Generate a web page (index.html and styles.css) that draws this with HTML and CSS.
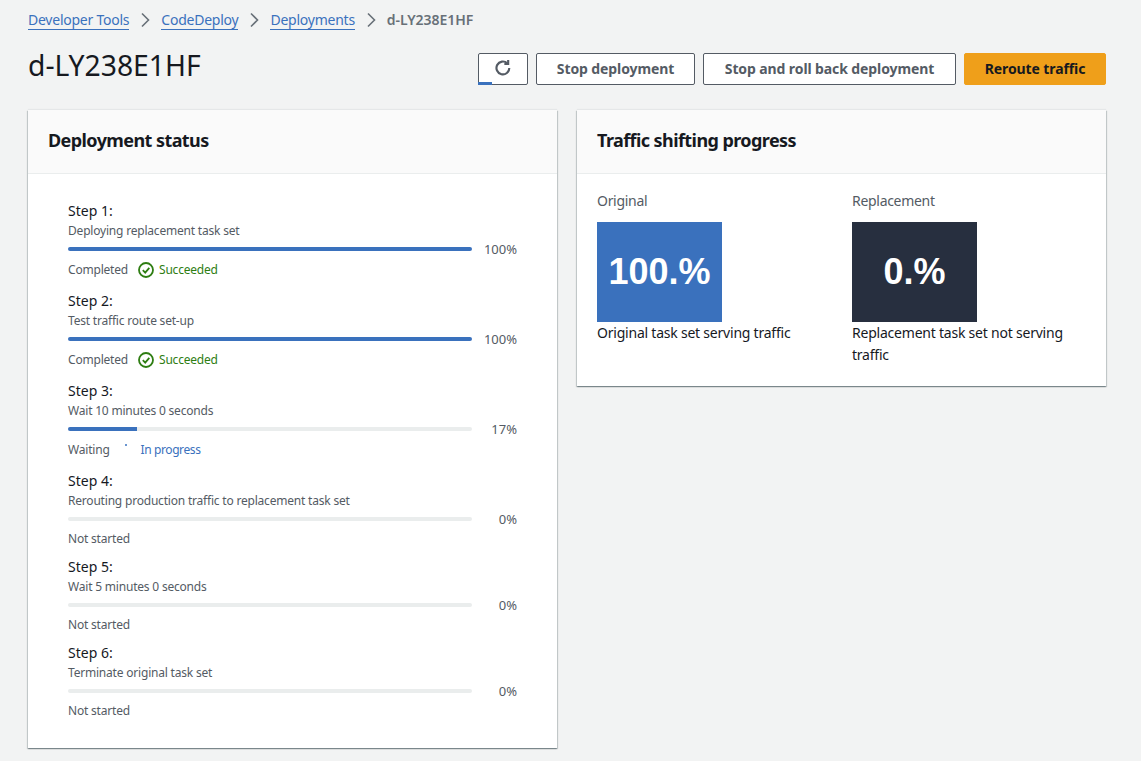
FILE: index.html
```html
<!DOCTYPE html>
<html>
  <head>
    <link rel="stylesheet" href="styles.css">
  </head>
  <body>
    <nav class="crumbs">
      <a href="#">Developer Tools</a>
      <svg class="chev" viewBox="0 0 10 16"><path d="M2 1.5 8.5 8 2 14.5"/></svg>
      <a href="#">CodeDeploy</a>
      <svg class="chev" viewBox="0 0 10 16"><path d="M2 1.5 8.5 8 2 14.5"/></svg>
      <a href="#">Deployments</a>
      <svg class="chev" viewBox="0 0 10 16"><path d="M2 1.5 8.5 8 2 14.5"/></svg>
      <span class="current">d-LY238E1HF</span>
    </nav>
    <header class="head">
      <h1>d-LY238E1HF</h1>
      <div class="actions">
        <button class="btn btn-icon">
          <svg viewBox="0 0 16 16"><path d="M13.6 7.9a5.7 5.7 0 1 1-1.8-4.1"/><path d="M12.6 0.9v3.4H9.2"/></svg>
          <span class="loader"></span>
        </button>
        <button class="btn btn-stop">Stop deployment</button>
        <button class="btn btn-roll">Stop and roll back deployment</button>
        <button class="btn btn-primary">Reroute traffic</button>
      </div>
    </header>
    <main class="cards">
      <section class="card">
        <h2>Deployment status</h2>
        <div class="steps">
          <div class="step">
            <div class="step-name">Step 1:</div>
            <div class="step-desc">Deploying replacement task set</div>
            <div class="bar-row"><div class="bar"><div class="fill" style="width: 100%"></div></div><span class="pct">100%</span></div>
            <div class="status">
              <span>Completed</span>
              <span class="ok"><svg viewBox="0 0 16 16"><circle cx="8" cy="8" r="7"/><path d="M4.8 8.2 7.2 10.6 11.3 5.9"/></svg>Succeeded</span>
            </div>
          </div>
          <div class="step">
            <div class="step-name">Step 2:</div>
            <div class="step-desc">Test traffic route set-up</div>
            <div class="bar-row"><div class="bar"><div class="fill" style="width: 100%"></div></div><span class="pct">100%</span></div>
            <div class="status">
              <span>Completed</span>
              <span class="ok"><svg viewBox="0 0 16 16"><circle cx="8" cy="8" r="7"/><path d="M4.8 8.2 7.2 10.6 11.3 5.9"/></svg>Succeeded</span>
            </div>
          </div>
          <div class="step">
            <div class="step-name">Step 3:</div>
            <div class="step-desc">Wait 10 minutes 0 seconds</div>
            <div class="bar-row"><div class="bar"><div class="fill" style="width: 17%"></div></div><span class="pct">17%</span></div>
            <div class="status">
              <span>Waiting</span>
              <span class="busy"><i class="dot"></i>In progress</span>
            </div>
          </div>
          <div class="step">
            <div class="step-name">Step 4:</div>
            <div class="step-desc">Rerouting production traffic to replacement task set</div>
            <div class="bar-row"><div class="bar"></div><span class="pct">0%</span></div>
            <div class="status-plain">Not started</div>
          </div>
          <div class="step">
            <div class="step-name">Step 5:</div>
            <div class="step-desc">Wait 5 minutes 0 seconds</div>
            <div class="bar-row"><div class="bar"></div><span class="pct">0%</span></div>
            <div class="status-plain">Not started</div>
          </div>
          <div class="step">
            <div class="step-name">Step 6:</div>
            <div class="step-desc">Terminate original task set</div>
            <div class="bar-row"><div class="bar"></div><span class="pct">0%</span></div>
            <div class="status-plain">Not started</div>
          </div>
        </div>
      </section>
      <section class="card">
        <h2>Traffic shifting progress</h2>
        <div class="shift">
          <div>
            <div class="shift-label">Original</div>
            <div class="box box-blue">100.%</div>
            <p>Original task set serving traffic</p>
          </div>
          <div>
            <div class="shift-label">Replacement</div>
            <div class="box box-dark">0.%</div>
            <p>Replacement task set not serving traffic</p>
          </div>
        </div>
      </section>
    </main>
  </body>
</html>
```

FILE: styles.css
```css
* {
  margin: 0;
  padding: 0;
  box-sizing: border-box;
}
body {
  background-color: #f2f3f3;
  color: #16191f;
  font-family: "Noto Sans", sans-serif;
  font-size: 14px;
  line-height: 20px;
  padding: 10px 35px 13px 28px;
}
.crumbs {
  display: flex;
  align-items: center;
  height: 20px;
  font-size: 14px;
}
.crumbs a {
  color: #3a71bd;
  text-decoration: none;
  border-bottom: 1px solid #3a71bd;
  line-height: 18px;
  letter-spacing: -0.24px;
}
.chev {
  width: 10px;
  height: 16px;
  margin: 0 11px;
  fill: none;
  stroke: #687078;
  stroke-width: 1.6;
}
.current {
  color: #687078;
  font-weight: 600;
  letter-spacing: -0.05px;
}
.head {
  display: flex;
  justify-content: space-between;
  align-items: flex-start;
  height: 32px;
  margin-top: 23px;
  margin-bottom: 25px;
}
h1 {
  font-size: 28.3px;
  font-weight: 400;
  line-height: 24px;
}
.actions {
  display: flex;
  gap: 8px;
}
.btn {
  height: 32px;
  padding-bottom: 2px;
  border: 1px solid #545b64;
  border-radius: 2px;
  background-color: #fff;
  color: #545b64;
  font-family: inherit;
  font-size: 14px;
  font-weight: 700;
  letter-spacing: -0.1px;
}
.btn-icon {
  position: relative;
  width: 50px;
}
.btn-icon svg {
  display: block;
  width: 18px;
  height: 18px;
  margin: 0 auto;
  fill: none;
  stroke: #545b64;
  stroke-width: 1.9;
}
.loader {
  position: absolute;
  left: -1px;
  bottom: -1px;
  width: 14px;
  height: 3px;
  background-color: #3a71bd;
}
.btn-stop {
  width: 159px;
}
.btn-roll {
  width: 253px;
}
.btn-primary {
  width: 142px;
  background-color: #ef9f1a;
  border-color: #ef9f1a;
  color: #16191f;
}
.cards {
  display: grid;
  grid-template-columns: 529px 529px;
  gap: 20px;
  align-items: start;
}
.card {
  background-color: #fff;
  box-shadow: 0 1px 1px 0 rgba(0, 28, 36, 0.3), 1px 1px 1px 0 rgba(0, 28, 36, 0.15), -1px 1px 1px 0 rgba(0, 28, 36, 0.15), 0 -1px 1px 0 rgba(0, 28, 36, 0.05);
}
.card h2 {
  height: 64px;
  padding: 0 20px;
  background-color: #fafafa;
  border-bottom: 1px solid #eaeded;
  font-size: 18px;
  font-weight: 700;
  line-height: 60px;
  letter-spacing: -0.58px;
}
.steps {
  padding: 27px 40px 29px;
}
.step {
  margin-bottom: 10px;
}
.step:last-child {
  margin-bottom: 0;
}
.step-name {
  height: 20px;
}
.step-desc {
  height: 18px;
  color: #545b64;
  font-size: 12px;
  line-height: 20px;
  letter-spacing: -0.2px;
}
.bar-row {
  display: flex;
  justify-content: space-between;
  align-items: center;
  height: 20px;
  color: #545b64;
  font-size: 13px;
}
.pct {
  margin-top: -1px;
}
.bar {
  width: 404px;
  height: 4px;
  background-color: #eaeded;
  border-radius: 2px;
  overflow: hidden;
}
.fill {
  height: 100%;
  background-color: #3a71bd;
}
.status {
  display: flex;
  align-items: center;
  gap: 10px;
  height: 22px;
  color: #545b64;
  font-size: 12px;
  letter-spacing: -0.2px;
}
.status-plain {
  height: 18px;
  color: #545b64;
  font-size: 12px;
  line-height: 19px;
  letter-spacing: -0.2px;
}
.ok {
  display: flex;
  align-items: center;
  gap: 5px;
  color: #2e7d12;
}
.ok svg {
  width: 16px;
  height: 16px;
  fill: none;
  stroke: #2e7d12;
  stroke-width: 1.8;
}
.busy {
  display: flex;
  align-items: center;
  color: #3a71bd;
  position: relative;
  padding-left: 21px;
  letter-spacing: -0.4px;
}
.dot {
  position: absolute;
  left: 5px;
  top: 4px;
  width: 2px;
  height: 2px;
  background-color: #6a95d0;
}
.shift {
  display: grid;
  grid-template-columns: 234px 234px;
  gap: 21px;
  padding: 17px 20px 20px;
}
.shift-label {
  height: 20px;
  margin-bottom: 11px;
  color: #545b64;
  letter-spacing: -0.3px;
}
.box {
  width: 125px;
  height: 100px;
  color: #fff;
  font-family: "Liberation Sans", sans-serif;
  font-size: 36px;
  font-weight: 700;
  line-height: 100px;
  text-align: center;
}
.box-blue {
  background-color: #3a71bd;
}
.box-dark {
  background-color: #272f3f;
}
.shift p {
  line-height: 22px;
  letter-spacing: -0.22px;
}
```
